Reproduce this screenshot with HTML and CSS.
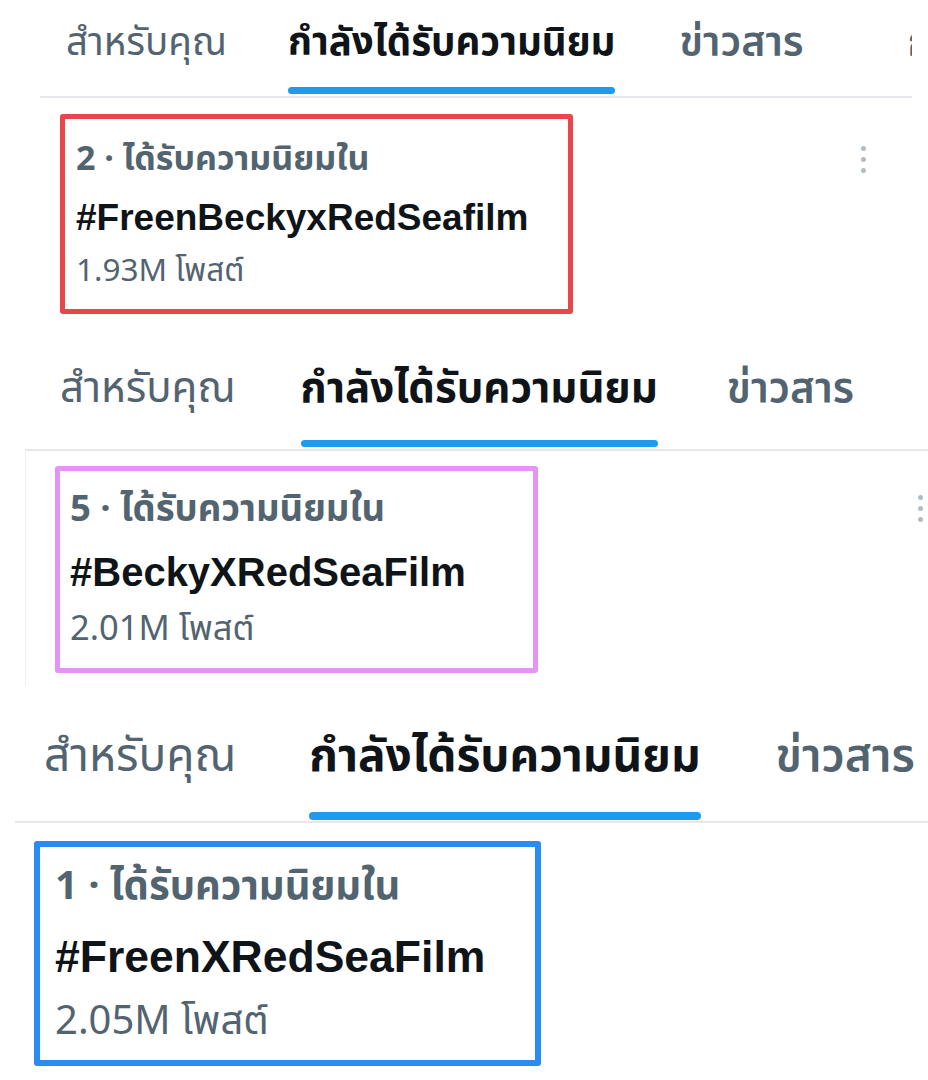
FILE: index.html
```html
<!DOCTYPE html>
<html lang="th">
<head>
<meta charset="utf-8">
<link rel="stylesheet" href="styles.css">
</head>
<body>
<main class="page">
  <section class="panel p1">
    <nav class="tabs">
      <span class="tab">สำหรับคุณ</span>
      <span class="tab active">กำลังได้รับความนิยม<i class="bar"></i></span>
      <span class="tab mid">ข่าวสาร</span>
      <span class="tab mid cut">ก</span>
    </nav>
    <div class="trend">
      <div class="box red">
        <div class="meta">2 · ได้รับความนิยมใน</div>
        <div class="tag">#FreenBeckyxRedSeafilm</div>
        <div class="count">1.93M โพสต์</div>
      </div>
      <span class="dots"><i></i><i></i><i></i></span>
    </div>
  </section>

  <section class="panel p2">
    <nav class="tabs">
      <span class="tab">สำหรับคุณ</span>
      <span class="tab active">กำลังได้รับความนิยม<i class="bar"></i></span>
      <span class="tab mid">ข่าวสาร</span>
    </nav>
    <div class="trend">
      <div class="box pink">
        <div class="meta">5 · ได้รับความนิยมใน</div>
        <div class="tag">#BeckyXRedSeaFilm</div>
        <div class="count">2.01M โพสต์</div>
      </div>
      <span class="dots"><i></i><i></i><i></i></span>
    </div>
  </section>

  <section class="panel p3">
    <nav class="tabs">
      <span class="tab">สำหรับคุณ</span>
      <span class="tab active">กำลังได้รับความนิยม<i class="bar"></i></span>
      <span class="tab mid">ข่าวสาร</span>
    </nav>
    <div class="trend">
      <div class="box blue">
        <div class="meta">1 · ได้รับความนิยมใน</div>
        <div class="tag">#FreenXRedSeaFilm</div>
        <div class="count">2.05M โพสต์</div>
      </div>
    </div>
  </section>
</main>
</body>
</html>
```
FILE: styles.css
```css
html, body {
  margin: 0;
  padding: 0;
  background: #ffffff;
}
body {
  width: 928px;
  height: 1080px;
  overflow: hidden;
  font-family: "Noto Sans Thai", "Liberation Sans", "Noto Sans", sans-serif;
  color: #0f1419;
}
.page {
  display: flex;
  flex-direction: column;
}
.panel {
  display: flex;
  flex-direction: column;
}
.tabs {
  display: flex;
  align-items: flex-start;
  white-space: nowrap;
  overflow: hidden;
  border-bottom: 2px solid #e4e8eb;
}
.tab {
  position: relative;
  color: #536471;
  font-weight: 400;
}
.tab.mid {
  font-weight: 600;
}
.tab.active {
  color: #0f1419;
  font-weight: 700;
}
.bar {
  position: absolute;
  left: 0;
  right: 0;
  bottom: 2px;
  height: 7px;
  border-radius: 4px;
  background: #1d9bf0;
}
.trend {
  display: flex;
  align-items: flex-start;
  justify-content: space-between;
}
.box {
  display: flex;
  flex-direction: column;
  border-style: solid;
  border-radius: 3px;
  box-sizing: border-box;
}
.box.red { border-color: #e8464a; }
.box.pink { border-color: #e594f6; }
.box.blue { border-color: #2a8cf2; }
.meta {
  color: #536471;
  font-weight: 700;
  white-space: nowrap;
}
.tag {
  color: #0f1419;
  font-weight: 700;
  font-family: "Liberation Sans", Arial, sans-serif;
  white-space: nowrap;
}
.count {
  color: #536471;
  white-space: nowrap;
}
.dots {
  display: flex;
  flex-direction: column;
  gap: 6px;
}
.dots i {
  width: 5px;
  height: 5px;
  border-radius: 50%;
  background: #b2bcc4;
}

/* panel 1 */
.p1 { margin: 0 16px 0 40px; }
.p1 .tabs { padding-left: 26px; height: 96px; font-size: 38.5px; }
.p1 .tab { line-height: 86px; height: 96px; }
.p1 .tab + .tab { margin-left: 61px; }
.p1 .tab.mid { margin-left: 64px; font-size: 41px; }
.p1 .tab.cut { margin-left: 104px; }
.p1 .trend { margin: 16px 0 0 20px; padding-right: 46px; }
.p1 .box { border-width: 5px; width: 513px; height: 200px; padding-left: 11px; }
.p1 .meta { font-size: 34px; line-height: 40px; margin-top: 21px; }
.p1 .tag { font-size: 37px; line-height: 44px; margin-top: 16px; }
.p1 .count { font-size: 31.5px; line-height: 36px; margin-top: 14px; }
.p1 .dots { margin-top: 32px; }

/* panel 2 */
.p2 { margin: 18px 0 0 25px; height: 354px; }
.p2 .tabs { padding-left: 35px; height: 117px; font-size: 42px; }
.p2 .tab { line-height: 114px; height: 117px; }
.p2 .tab + .tab { margin-left: 65px; }
.p2 .tab.mid { margin-left: 69px; }
.p2 .trend { padding: 15px 5px 0 29px; border-left: 1px solid #eef1f3; flex: 1; }
.p2 .box { border-width: 5px; width: 483px; height: 207px; padding-left: 10px; }
.p2 .meta { font-size: 36.5px; line-height: 40px; margin-top: 19px; }
.p2 .tag { font-size: 40px; line-height: 46px; margin-top: 19px; }
.p2 .count { font-size: 34.5px; line-height: 38px; margin-top: 16px; }
.p2 .dots { margin-top: 29px; }

/* panel 3 */
.p3 { margin: 0 0 0 15px; }
.p3 .tabs { padding-left: 29px; height: 135px; font-size: 46px; }
.p3 .tab { line-height: 142px; height: 135px; }
.p3 .tab + .tab { margin-left: 73px; }
.p3 .tab.mid { margin-left: 75px; }
.p3 .tab.active .bar { height: 8px; bottom: 1px; }
.p3 .trend { margin: 18px 0 0 19px; }
.p3 .box { border-width: 6px; width: 507px; height: 225px; padding-left: 15px; }
.p3 .meta { font-size: 40px; line-height: 44px; margin-top: 18px; }
.p3 .tag { font-size: 44.5px; line-height: 50px; margin-top: 23px; }
.p3 .count { font-size: 40px; line-height: 42px; margin-top: 19px; }
```
